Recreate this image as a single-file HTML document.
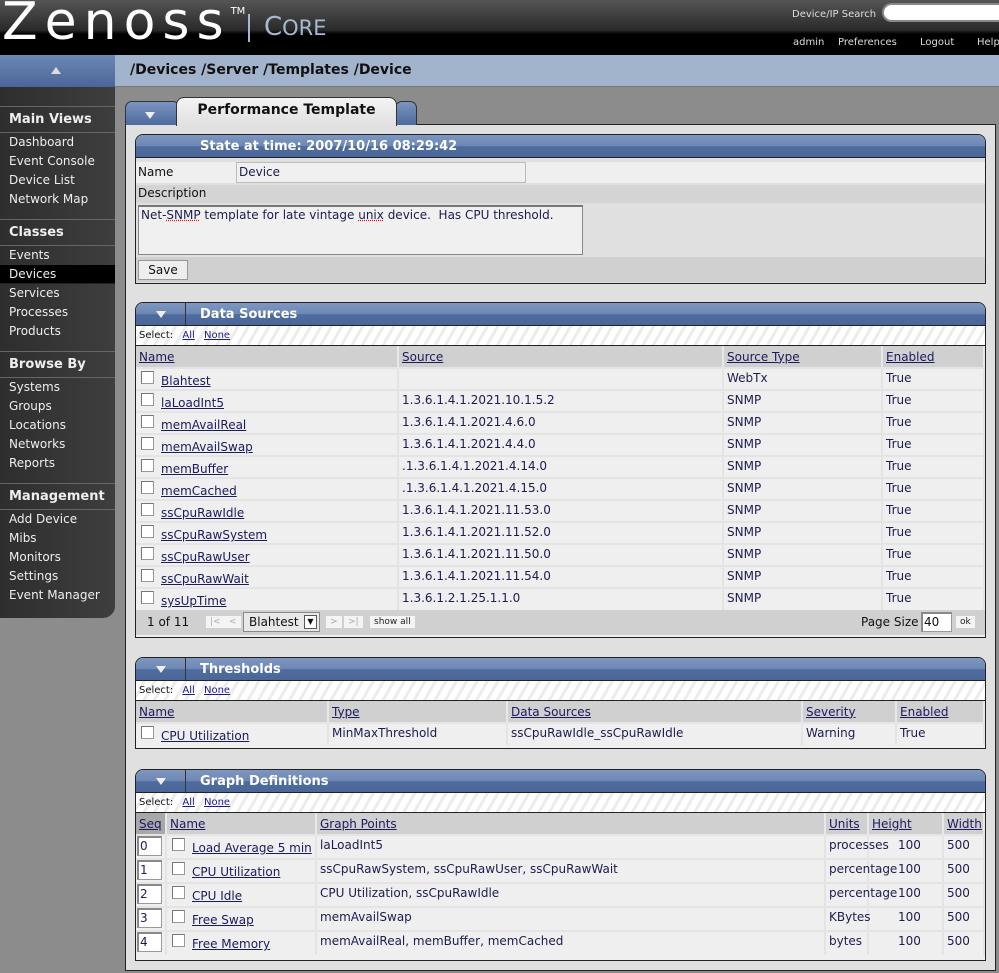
<!DOCTYPE html>
<html><head><meta charset="utf-8"><style>
*{box-sizing:border-box;margin:0;padding:0}
body{width:999px;height:973px;overflow:hidden;background:#8c8c8c;font-family:"DejaVu Sans",Verdana,sans-serif;font-size:12px;color:#1c1c50;position:relative}
.abs{position:absolute}
#hdr{left:0;top:0;width:999px;height:55px;background:linear-gradient(#555 0,#2a2a2a 30px,#000 34px,#000 55px)}
#logo{left:2px;top:-8px;font-family:"DejaVu Sans",sans-serif;font-size:52px;color:#fff;letter-spacing:7px}
#core{left:248px;top:12px;font-size:26px;color:#a8b8d0;font-family:"DejaVu Sans",sans-serif}
#hdr .t{color:#ddd;font-size:10px}
#nav{left:0;top:55px;width:999px;height:32px;background:#a2b3cc;border-bottom:1px solid #777}
#navl{left:0;top:55px;width:115px;height:32px;background:linear-gradient(#6e88b4,#4a6699)}
#crumb{left:130px;top:62px;font-weight:bold;font-size:14px;color:#111}
#side{left:0;top:87px;width:115px;height:531px;background:linear-gradient(90deg,#2e2e2e,#3e3e3e);border-bottom-right-radius:12px}
#side div{color:#eee;font-size:12px;height:19px;line-height:19px;padding-left:9px}
#side .h{font-weight:bold;font-size:13px;height:27px;line-height:25px;border-top:1px solid #666;border-bottom:1px solid #666}
#side .sel{background:#000}
#side .h.m{margin-top:10px}
#panel{left:125px;top:124px;width:871px;height:847px;background:#e0e0e0;border:1px solid #222}
.tab{background:linear-gradient(#7c95c0,#4d6a9e);border:1px solid #333;border-bottom:none;border-radius:7px 7px 0 0}
.sec{position:absolute;left:135px;width:851px;border:1px solid #222;background:#efefef;border-radius:8px 8px 0 0}
.sh{height:23px;background:linear-gradient(#7e97c0,#6d88b5 50%,#4f6c9f 52%,#4b679a);border-radius:7px 7px 0 0;color:#fff;font-weight:bold;font-size:13px;line-height:23px;position:relative;border-bottom:1px solid #222}
.sh .tg{position:absolute;left:0;top:0;width:50px;height:22px;border-right:1px solid #333}
.tri{position:absolute;width:0;height:0;border-left:5px solid transparent;border-right:5px solid transparent;border-top:7px solid #eee}
.sel{height:20px;font-size:10px;line-height:19px;padding-left:3px;color:#111;background:repeating-linear-gradient(120deg,#fff 0,#fff 6px,#ececec 6px,#ececec 9px);border-bottom:1px solid #222}
.sel a{color:#1a1a8a;margin-left:6px;text-decoration:underline}
table{border-collapse:collapse;width:100%;table-layout:fixed}
th{background:#d0d0d0;font-weight:normal;text-align:left;height:22px;padding-left:3px;border-right:2px solid #e8e8e8}
th span,a.u,.u{text-decoration:underline;color:#1a1a5e}
td{height:22px;padding-left:3px;border-top:2px solid #e4e4e4;border-right:2px solid #e4e4e4;white-space:nowrap;overflow:hidden;vertical-align:top;padding-top:2px}
.cb{display:inline-block;width:13px;height:13px;border:1px solid #999;border-top-color:#777;border-left-color:#777;background:#fff;vertical-align:middle;margin:0 7px 0 2px;position:relative;top:-1px}
td a{position:relative;top:3px}
.inp{display:inline-block;border:1px solid #999;border-top:2px solid #888;border-left:2px solid #888;background:#fff;height:20px;width:25px;padding-left:1px;line-height:17px}
.btn{display:inline-block;background:#f4f4f4;font-size:9px;padding:1px 4px;color:#222}
.g td{height:24px}
.g td.ov{overflow:visible}
</style></head><body>
<div id="hdr" class="abs">
<div id="logo" class="abs">Zenoss<sup style="font-size:10px;vertical-align:top;position:relative;top:14px;letter-spacing:0">TM</sup></div>
<div class="abs" style="left:248px;top:14px;width:2px;height:28px;background:#a8b8d0"></div>
<div id="core" class="abs" style="left:264px">C<span style="font-size:21px">ORE</span></div>
<div class="abs t" style="left:792px;top:9px">Device/IP Search</div>
<div class="abs" style="left:882px;top:3px;width:125px;height:19px;border-radius:10px;background:#fff;border:2px solid #888"></div>
<div class="abs t" style="left:793px;top:37px">admin</div>
<div class="abs t" style="left:838px;top:37px">Preferences</div>
<div class="abs t" style="left:920px;top:37px">Logout</div>
<div class="abs t" style="left:977px;top:37px">Help</div>
</div>
<div id="nav" class="abs"></div>
<div id="navl" class="abs"><div class="tri" style="left:51px;top:12px;border-top:none;border-bottom:7px solid #ddd"></div></div>
<div id="crumb" class="abs">/Devices /Server /Templates /Device</div>
<div id="side" class="abs">
<div style="height:19px"></div>
<div class="h">Main Views</div><div>Dashboard</div><div>Event Console</div><div>Device List</div><div>Network Map</div>
<div class="h m">Classes</div><div>Events</div><div class="sel">Devices</div><div>Services</div><div>Processes</div><div>Products</div>
<div class="h m">Browse By</div><div>Systems</div><div>Groups</div><div>Locations</div><div>Networks</div><div>Reports</div>
<div class="h m">Management</div><div>Add Device</div><div>Mibs</div><div>Monitors</div><div>Settings</div><div>Event Manager</div>
</div>
<div id="panel" class="abs"></div>
<div class="abs tab" style="left:125px;top:101px;width:55px;height:24px"><div class="tri" style="left:19px;top:10px"></div></div>
<div class="abs tab" style="left:395px;top:101px;width:22px;height:24px"></div>
<div class="abs" style="left:176px;top:97px;width:221px;height:29px;background:linear-gradient(#f4f4f4,#e0e0e0);border:1px solid #333;border-bottom:none;border-radius:8px 8px 0 0;text-align:center;font-weight:bold;font-size:14px;line-height:25px;color:#111">Performance Template</div>

<div class="sec" style="top:134px;height:150px;background:#e0e0e0">
<div class="sh" style="padding-left:64px">State at time: 2007/10/16 08:29:42</div>
<div class="abs" style="left:0;top:27px;width:849px;height:21px;background:#efefef"></div>
<div class="abs" style="left:2px;top:30px;color:#111">Name</div>
<div class="abs" style="left:100px;top:27px;width:290px;height:21px;background:#f0f0f0;border:1px solid #bbb;padding:2px 2px">Device</div>
<div class="abs" style="left:0;top:50px;width:849px;height:18px;background:#d4d4d4;padding:1px 2px;color:#111">Description</div>
<div class="abs" style="left:2px;top:70px;width:445px;height:50px;background:#f0f0f0;border:1px solid #888;border-top:2px solid #777;padding:1px 2px">Net-<span style="text-decoration:underline dotted red">SNMP</span> template for late vintage <span style="text-decoration:underline dotted red">unix</span> device.&nbsp; Has CPU threshold.</div>
<div class="abs" style="left:0;top:122px;width:849px;height:25px;background:#d0d0d0"></div>
<div class="abs" style="left:2px;top:125px;width:50px;height:20px;background:#eee;border:1px solid #999;text-align:center;line-height:18px;color:#111">Save</div>
</div>

<div class="sec" style="top:302px;height:336px">
<div class="sh" style="padding-left:64px"><div class="tg"><div class="tri" style="left:20px;top:8px"></div></div>Data Sources</div>
<div class="sel">Select: <a>All</a> <a>None</a></div>
<table><colgroup><col style="width:262px"><col style="width:325px"><col style="width:159px"><col></colgroup>
<tr><th><span>Name</span></th><th><span>Source</span></th><th><span>Source Type</span></th><th><span>Enabled</span></th></tr>
<tr><td><i class="cb"></i><a class="u">Blahtest</a></td><td></td><td>WebTx</td><td>True</td></tr>
<tr><td><i class="cb"></i><a class="u">laLoadInt5</a></td><td>1.3.6.1.4.1.2021.10.1.5.2</td><td>SNMP</td><td>True</td></tr>
<tr><td><i class="cb"></i><a class="u">memAvailReal</a></td><td>1.3.6.1.4.1.2021.4.6.0</td><td>SNMP</td><td>True</td></tr>
<tr><td><i class="cb"></i><a class="u">memAvailSwap</a></td><td>1.3.6.1.4.1.2021.4.4.0</td><td>SNMP</td><td>True</td></tr>
<tr><td><i class="cb"></i><a class="u">memBuffer</a></td><td>.1.3.6.1.4.1.2021.4.14.0</td><td>SNMP</td><td>True</td></tr>
<tr><td><i class="cb"></i><a class="u">memCached</a></td><td>.1.3.6.1.4.1.2021.4.15.0</td><td>SNMP</td><td>True</td></tr>
<tr><td><i class="cb"></i><a class="u">ssCpuRawIdle</a></td><td>1.3.6.1.4.1.2021.11.53.0</td><td>SNMP</td><td>True</td></tr>
<tr><td><i class="cb"></i><a class="u">ssCpuRawSystem</a></td><td>1.3.6.1.4.1.2021.11.52.0</td><td>SNMP</td><td>True</td></tr>
<tr><td><i class="cb"></i><a class="u">ssCpuRawUser</a></td><td>1.3.6.1.4.1.2021.11.50.0</td><td>SNMP</td><td>True</td></tr>
<tr><td><i class="cb"></i><a class="u">ssCpuRawWait</a></td><td>1.3.6.1.4.1.2021.11.54.0</td><td>SNMP</td><td>True</td></tr>
<tr><td><i class="cb"></i><a class="u">sysUpTime</a></td><td>1.3.6.1.2.1.25.1.1.0</td><td>SNMP</td><td>True</td></tr>
</table>
<div style="height:25px;background:#d0d0d0;position:relative;color:#111">
<span class="abs" style="left:11px;top:5px">1 of 11</span>
<span class="abs btn" style="left:70px;top:6px;color:#aaa">|&lt;</span><span class="abs btn" style="left:89px;top:6px;color:#aaa">&lt;</span>
<span class="abs" style="left:107px;top:2px;width:77px;height:20px;background:#e8e8e8;border:1px solid #888;padding-left:5px;line-height:18px">Blahtest<span class="abs" style="right:2px;top:2px;width:13px;height:14px;background:#fff;border:1px solid #555;font-size:8px;text-align:center;line-height:12px">▼</span></span>
<span class="abs btn" style="left:190px;top:6px;color:#aaa">&gt;</span><span class="abs btn" style="left:208px;top:6px;color:#aaa">&gt;|</span>
<span class="abs btn" style="left:234px;top:6px">show all</span>
<span class="abs" style="left:725px;top:5px">Page Size</span>
<span class="abs inp" style="left:785px;top:2px;width:31px">40</span>
<span class="abs btn" style="left:820px;top:6px">ok</span>
</div>
</div>

<div class="sec" style="top:657px;height:92px">
<div class="sh" style="padding-left:64px"><div class="tg"><div class="tri" style="left:20px;top:8px"></div></div>Thresholds</div>
<div class="sel">Select: <a>All</a> <a>None</a></div>
<table><colgroup><col style="width:192px"><col style="width:179px"><col style="width:295px"><col style="width:94px"><col></colgroup>
<tr><th><span>Name</span></th><th><span>Type</span></th><th><span>Data Sources</span></th><th><span>Severity</span></th><th><span>Enabled</span></th></tr>
<tr><td><i class="cb"></i><a class="u">CPU Utilization</a></td><td>MinMaxThreshold</td><td>ssCpuRawIdle_ssCpuRawIdle</td><td>Warning</td><td>True</td></tr>
</table>
</div>

<div class="sec g" style="top:769px;height:192px">
<div class="sh" style="padding-left:64px"><div class="tg"><div class="tri" style="left:20px;top:8px"></div></div>Graph Definitions</div>
<div class="sel">Select: <a>All</a> <a>None</a></div>
<table><colgroup><col style="width:30px"><col style="width:150px"><col style="width:509px"><col style="width:43px"><col style="width:75px"><col></colgroup>
<tr><th style="background:#a8a8a8"><span>Seq</span></th><th><span>Name</span></th><th><span>Graph Points</span></th><th><span>Units</span></th><th><span>Height</span></th><th><span>Width</span></th></tr>
<tr><td style="padding:0 0 0 1px"><span class="inp">0</span></td><td><i class="cb"></i><a class="u">Load Average 5 min</a></td><td>laLoadInt5</td><td class="ov">processes</td><td style="padding-left:29px">100</td><td>500</td></tr>
<tr><td style="padding:0 0 0 1px"><span class="inp">1</span></td><td><i class="cb"></i><a class="u">CPU Utilization</a></td><td>ssCpuRawSystem, ssCpuRawUser, ssCpuRawWait</td><td class="ov">percentage</td><td style="padding-left:29px">100</td><td>500</td></tr>
<tr><td style="padding:0 0 0 1px"><span class="inp">2</span></td><td><i class="cb"></i><a class="u">CPU Idle</a></td><td>CPU Utilization, ssCpuRawIdle</td><td class="ov">percentage</td><td style="padding-left:29px">100</td><td>500</td></tr>
<tr><td style="padding:0 0 0 1px"><span class="inp">3</span></td><td><i class="cb"></i><a class="u">Free Swap</a></td><td>memAvailSwap</td><td class="ov">KBytes</td><td style="padding-left:29px">100</td><td>500</td></tr>
<tr><td style="padding:0 0 0 1px"><span class="inp">4</span></td><td><i class="cb"></i><a class="u">Free Memory</a></td><td>memAvailReal, memBuffer, memCached</td><td class="ov">bytes</td><td style="padding-left:29px">100</td><td>500</td></tr>
</table>
</div>
</body></html>
